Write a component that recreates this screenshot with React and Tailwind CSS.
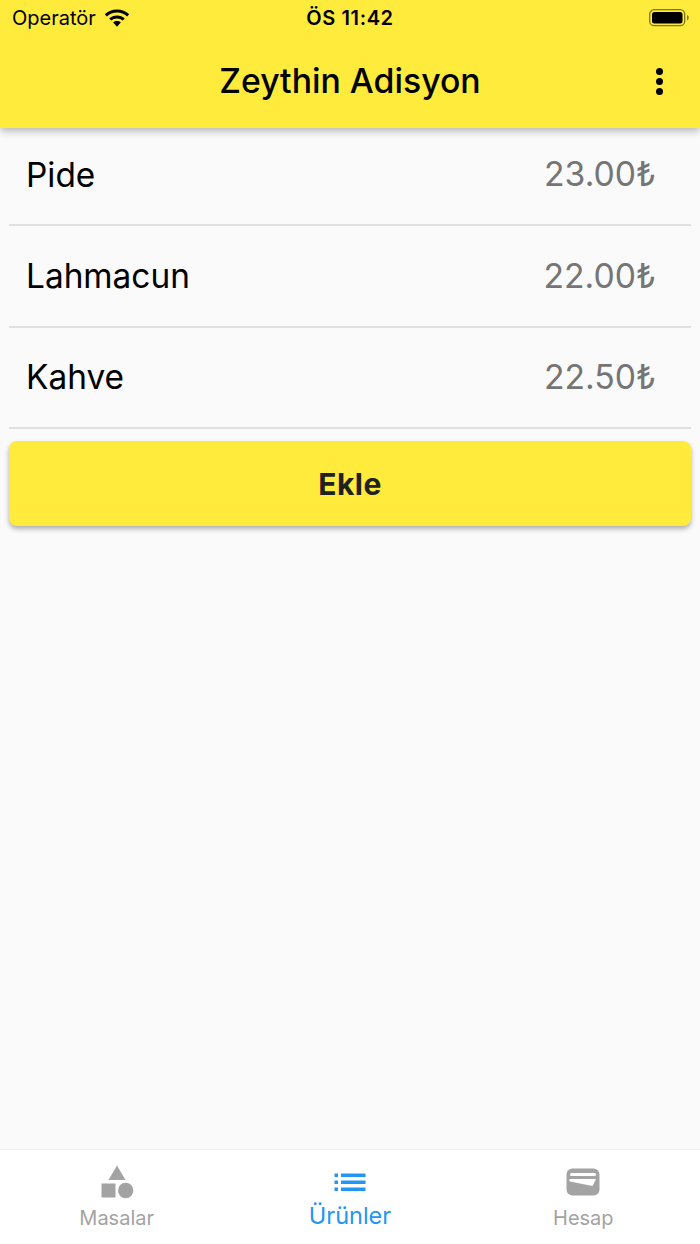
import React from 'react';

const products = [
  { name: 'Pide', price: '23.00₺' },
  { name: 'Lahmacun', price: '22.00₺' },
  { name: 'Kahve', price: '22.50₺' },
];

const WifiIcon = () => (
  <svg width="26" height="20" viewBox="0 0 26 20" fill="#000">
    <path d="M13 1.500c4.700 0 9 1.800 12.200 4.800l-2.100 2.200C20.500 6 16.900 4.500 13 4.500S5.500 6 2.900 8.500L.8 6.300C4 3.300 8.300 1.500 13 1.500z" />
    <path d="M13 7.400c3 0 5.700 1.100 7.800 3l-2.100 2.200c-1.500-1.400-3.500-2.200-5.700-2.200s-4.200.8-5.700 2.200l-2.100-2.200c2.100-1.900 4.800-3 7.800-3z" />
    <path d="M13 13c1.500 0 2.800.5 3.800 1.400L13 18.800l-3.800-4.400c1-.9 2.300-1.400 3.800-1.400z" />
  </svg>
);

const BatteryIcon = () => (
  <svg width="42" height="20" viewBox="0 0 42 20">
    <rect x="0.700" y="1.700" width="35" height="16" rx="4.500" fill="none" stroke="#000" strokeOpacity="0.500" strokeWidth="1.300" />
    <rect x="3" y="4" width="30.500" height="11.400" rx="2.500" fill="#000" />
    <path d="M38 7v5.400c1-.4 1.700-1.500 1.700-2.700S39 7.400 38 7z" fill="#000" fillOpacity="0.500" />
  </svg>
);

const ShapesIcon = () => (
  <svg width="34" height="34" viewBox="0 0 34 34" fill="#a3a3a3">
    <path d="M17 0.500l8.500 14.500H8.500z" />
    <rect x="1.500" y="18.500" width="14" height="14" />
    <circle cx="25.700" cy="25.500" r="7.700" />
  </svg>
);

const ListIcon = () => (
  <svg width="32" height="19" viewBox="0 0 32 19" fill="#2196f3">
    <rect x="0.500" y="0.500" width="3.500" height="3.500" />
    <rect x="7" y="0.500" width="24.500" height="3.500" />
    <rect x="0.500" y="7.500" width="3.500" height="3.500" />
    <rect x="7" y="7.500" width="24.500" height="3.500" />
    <rect x="0.500" y="14.500" width="3.500" height="3.500" />
    <rect x="7" y="14.500" width="24.500" height="3.500" />
  </svg>
);

const WalletIcon = () => (
  <svg width="34" height="28" viewBox="0 0 34 28">
    <rect x="0.500" y="0.500" width="33" height="27" rx="6" fill="#a3a3a3" />
    <rect x="4" y="5" width="26" height="3" rx="1.500" fill="#fff" />
    <path d="M4 11h26l-3.500 7L4 13.500a1.500 1.500 0 0 1 0-2.500z" fill="#fff" />
  </svg>
);

const StatusBar = () => (
  <div className="grid grid-cols-3 items-center h-[40px] px-[12px] text-[20px] text-black">
    <div className="flex items-center gap-[8px] -mt-[4px]">
      <span>Operatör</span>
      <WifiIcon />
    </div>
    <div className="text-center font-semibold -mt-[4px] tracking-[0.6px]">ÖS 11:42</div>
    <div className="flex justify-end -mt-[4px] -mr-[3px]">
      <BatteryIcon />
    </div>
  </div>
);

const AppBar = () => (
  <header className="relative z-10 h-[128px] bg-[#ffeb3b] shadow-[0_3px_8px_rgba(0,0,0,0.28)]">
    <StatusBar />
    <div className="relative flex items-center justify-center h-[82px]">
      <h1 className="text-[33.800px] font-medium text-black leading-none">Zeythin Adisyon</h1>
      {/* menu dots */}
      <div className="absolute right-[37px] top-[28px] flex flex-col gap-[3px]">
        <span className="w-[7px] h-[7px] rounded-full bg-black" />
        <span className="w-[7px] h-[7px] rounded-full bg-black" />
        <span className="w-[7px] h-[7px] rounded-full bg-black" />
      </div>
    </div>
  </header>
);

const ProductRow = ({ product }) => (
  <div className="flex items-center justify-between h-[101.300px] pl-[17px] pr-[35px] border-b-2 border-[#e0e0e0]">
    <span className="text-[33.400px] text-black">{product.name}</span>
    <span className="text-[33.700px] text-[#757575]">{product.price}</span>
  </div>
);

const NavItem = ({ icon, label, active }) => (
  <div className="flex flex-col items-center justify-start">
    <div className="h-[36px] flex items-center justify-center">{icon}</div>
    <span className={active ? 'mt-[2px] text-[23.500px] leading-[28px] text-[#2196f3]' : 'mt-[4px] text-[20px] leading-[28px] text-[#a3a3a3]'}>{label}</span>
  </div>
);

const App = () => {
  return (
    <div className="flex flex-col w-[700px] h-[1244px] bg-[#fafafa] font-['Inter','Liberation_Sans',sans-serif] overflow-hidden">
      <AppBar />
      <main className="flex-1 px-[9px] -mt-[3px]">
        {products.map(product => (
          <ProductRow key={product.name} product={product} />
        ))}
        <button className="w-full h-[85px] mt-[12px] pt-[2px] rounded-[8px] bg-[#ffeb3b] text-[30px] tracking-[0.5px] font-bold text-[#212121] shadow-[0_3px_5px_rgba(0,0,0,0.3)]">
          Ekle
        </button>
      </main>
      <nav className="grid grid-cols-3 h-[95px] bg-white border-t border-[#f0f0f0] pt-[14px]">
        <NavItem icon={<ShapesIcon />} label="Masalar" />
        <NavItem icon={<ListIcon />} label="Ürünler" active />
        <NavItem icon={<WalletIcon />} label="Hesap" />
      </nav>
    </div>
  );
};

export default App;
